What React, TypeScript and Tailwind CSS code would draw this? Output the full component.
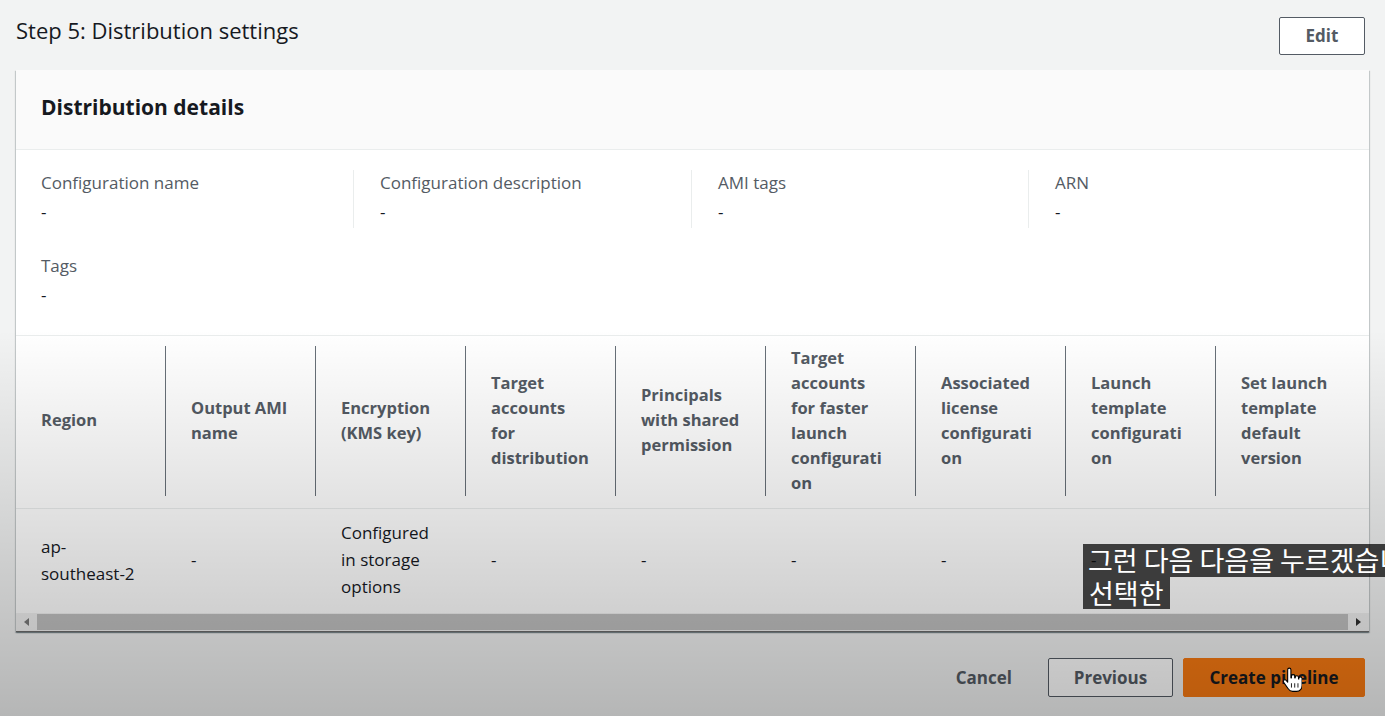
import React from 'react';

const kvTop = [
  { label: 'Configuration name', value: '-' },
  { label: 'Configuration description', value: '-' },
  { label: 'AMI tags', value: '-' },
  { label: 'ARN', value: '-' },
];

// header labels, broken the way the narrow columns wrap them
const columns: string[][] = [
  ['Region'],
  ['Output AMI', 'name'],
  ['Encryption', '(KMS key)'],
  ['Target', 'accounts', 'for', 'distribution'],
  ['Principals', 'with shared', 'permission'],
  ['Target', 'accounts', 'for faster', 'launch', 'configurati', 'on'],
  ['Associated', 'license', 'configurati', 'on'],
  ['Launch', 'template', 'configurati', 'on'],
  ['Set launch', 'template', 'default', 'version'],
];

const row: string[][] = [
  ['ap-', 'southeast-2'],
  ['-'],
  ['Configured', 'in storage', 'options'],
  ['-'],
  ['-'],
  ['-'],
  ['-'],
  ['-'],
  ['-'],
];

function HandCursor() {
  return (
    <svg width="20" height="26" viewBox="0 0 18 24" className="absolute left-[1282px] top-[667px]">
      <path
        d="M5 2.5a1.5 1.5 0 0 1 3 0V10h.5V8.5a1.5 1.5 0 0 1 3 0V10h.5V9.5a1.5 1.5 0 0 1 3 0V11h.3v-.4a1.5 1.5 0 0 1 3 0V17c0 3-2 5.5-5 5.5H9.5c-2 0-3.2-1-4.2-2.6L1.3 14.2a1.5 1.5 0 0 1 2.4-1.8L5 14Z"
        fill="#fff"
        stroke="#000"
        strokeWidth="1"
        strokeLinejoin="round"
      />
      <path d="M8.5 15v4M11.5 15v4M14.5 15v4" stroke="#000" strokeWidth="0.8" />
    </svg>
  );
}

export default function App() {
  return (
    <div className="relative h-[716px] w-[1385px] overflow-hidden bg-[#f2f3f3] font-['Open_Sans','Noto_Sans',sans-serif] text-[#16191f]">
      {/* Page header */}
      <div className="flex items-start justify-between pl-4 pr-[20px] pt-[17px]">
        <h1 className="-mt-[1px] text-[22px] leading-[28px]">Step 5: Distribution settings</h1>
        <button className="h-[38px] w-[86px] rounded-[2px] border border-[#545b64] bg-white text-[17px] font-bold text-[#545b64]">
          Edit
        </button>
      </div>

      {/* Container */}
      <div className="mx-4 mt-[15px] overflow-hidden bg-white shadow-[0_1px_1px_0_rgba(0,28,36,0.3),1px_1px_1px_0_rgba(0,28,36,0.15),-1px_1px_1px_0_rgba(0,28,36,0.15)]">
        <div className="flex h-[80px] items-center border-b border-[#eaeded] bg-[#fafafa] px-[25px] pb-[6px]">
          <h2 className="text-[21px] font-bold leading-[28px]">Distribution details</h2>
        </div>

        <div className="pl-[25px] pt-[20px] pb-[27px]">
          <div className="grid grid-cols-[312px_338px_337px_1fr]">
            {kvTop.map((kv, i) => (
              <div key={kv.label} className={`h-[58px] ${i > 0 ? 'border-l border-[#eaeded] pl-[26px]' : ''}`}>
                <div className="text-[17px] leading-[26px] text-[#545b64]">{kv.label}</div>
                <div className="mt-[3px] text-[17px] leading-[26px]">{kv.value}</div>
              </div>
            ))}
          </div>
          <div className="mt-[25px]">
            <div className="text-[17px] leading-[26px] text-[#545b64]">Tags</div>
            <div className="mt-[3px] text-[17px] leading-[26px]">-</div>
          </div>
        </div>

        {/* Table */}
        <div className="overflow-hidden border-t border-[#eaeded]">
          <div className="w-[1360px]">
            <div className="flex pb-[12px] pt-[10px]">
              {columns.map((lines, i) => (
                <div
                  key={i}
                  className={`flex h-[150px] shrink-0 flex-col justify-center pb-[3px] text-[16.5px] font-bold leading-[25px] text-[#545b64] ${
                    i === 0 ? 'w-[149px] pl-[25px]' : 'w-[150px] border-l border-[#687078] pl-[25px]'
                  }`}
                >
                  {lines.map((l) => (
                    <span key={l} className="whitespace-nowrap">{l}</span>
                  ))}
                </div>
              ))}
            </div>
            <div className="flex h-[105px] items-center border-t border-[#eaeded] pb-[3px]">
              {row.map((lines, i) => (
                <div
                  key={i}
                  className={`flex shrink-0 flex-col text-[17px] leading-[27px] ${
                    i === 0 ? 'w-[149px] pl-[25px]' : 'w-[150px] pl-[26px]'
                  }`}
                >
                  {lines.map((l) => (
                    <span key={l} className="whitespace-nowrap">{l}</span>
                  ))}
                </div>
              ))}
            </div>
          </div>
        </div>

        {/* Horizontal scrollbar */}
        <div className="flex h-[19px] items-center border-b border-[#6b6b6b] bg-[#f1f1f1]">
          <div className="flex w-[21px] justify-center">
            <span className="h-0 w-0 border-y-[4px] border-r-[5px] border-y-transparent border-r-[#7a7a7a]" />
          </div>
          <div className="h-[16px] flex-1 bg-[#c1c1c1]" />
          <div className="flex w-[21px] justify-center">
            <span className="h-0 w-0 border-y-[4px] border-l-[5px] border-y-transparent border-l-[#303030]" />
          </div>
        </div>
      </div>

      {/* Footer actions */}
      <div className="mt-[26px] flex items-center justify-end gap-[10px] pr-[20px]">
        <button className="mr-[6px] h-[39px] px-5 text-[17px] font-bold text-[#545b64]">Cancel</button>
        <button className="h-[39px] w-[125px] rounded-[2px] border border-[#545b64] bg-white text-[17px] font-bold text-[#545b64]">
          Previous
        </button>
        <button className="h-[39px] w-[182px] rounded-[2px] border border-[#f87a12] bg-[#f87a12] text-[17px] font-bold text-[#16191f]">
          Create pipeline
        </button>
      </div>

      {/* Video bottom shade */}
      <div className="pointer-events-none absolute inset-0 bg-[linear-gradient(to_bottom,transparent_46%,rgba(0,0,0,0.25))]" />

      {/* Subtitle */}
      <div className="absolute left-[1083px] top-[544px] font-['Noto_Sans_CJK_KR',sans-serif] text-[27px] leading-[32.5px] text-white">
        <div className="w-fit whitespace-nowrap bg-[rgba(8,8,8,0.75)] px-[5px]">그런 다음 다음을 누르겠습니다</div>
        <div className="w-fit whitespace-nowrap bg-[rgba(8,8,8,0.75)] px-[6px]">선택한</div>
      </div>

      <HandCursor />
    </div>
  );
}
